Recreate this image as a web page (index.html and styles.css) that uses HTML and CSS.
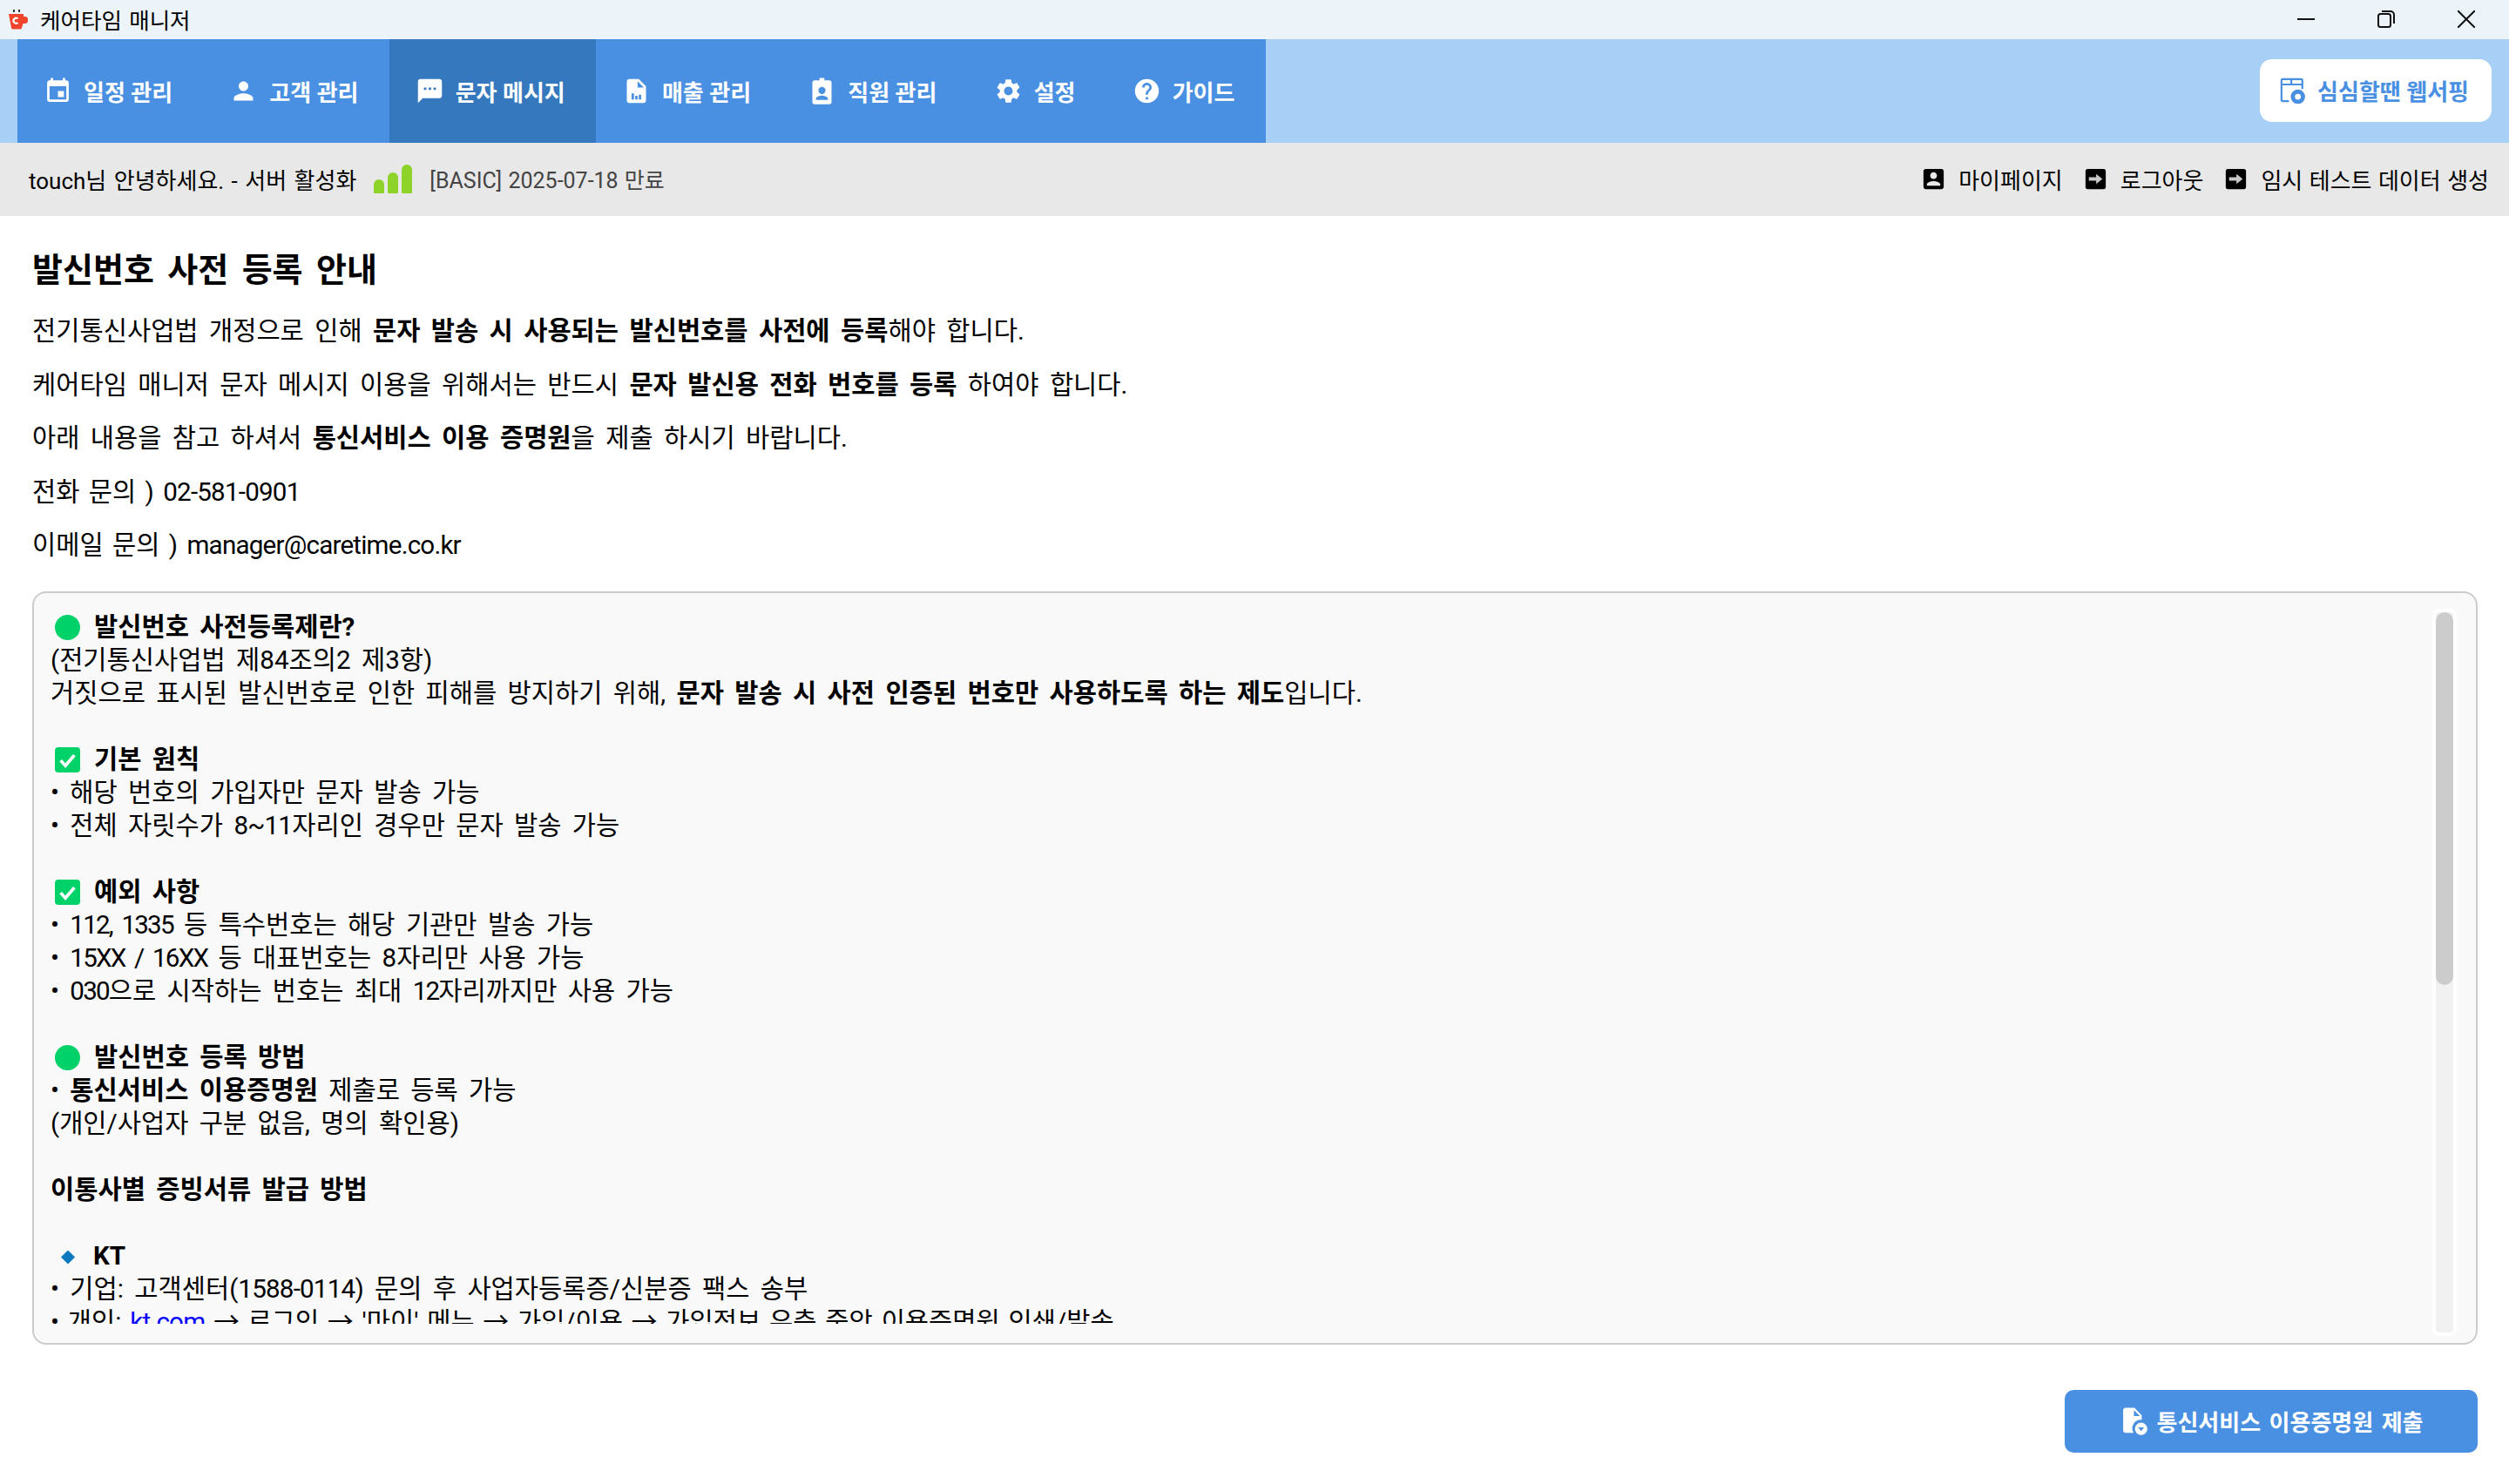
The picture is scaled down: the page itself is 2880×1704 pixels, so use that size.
FILE: index.html
```html
<!DOCTYPE html>
<html lang="ko">
<head>
  <meta charset="UTF-8">
  <title>케어타임 매니저</title>
  <link rel="stylesheet" href="styles.css">
</head>
<body>
  <svg class="icon-defs" xmlns="http://www.w3.org/2000/svg">
    <symbol id="i-event" viewBox="0 0 24 24"><path d="M17 12h-5v5h5v-5zM16 1v2H8V1H6v2H5c-1.11 0-1.99.9-1.99 2L3 19c0 1.1.89 2 2 2h14c1.1 0 2-.9 2-2V5c0-1.1-.9-2-2-2h-1V1h-2zm3 18H5V8h14v11z"/></symbol>
    <symbol id="i-person" viewBox="0 0 24 24"><path d="M12 12c2.21 0 4-1.79 4-4s-1.79-4-4-4-4 1.79-4 4 1.79 4 4 4zm0 2c-2.67 0-8 1.34-8 4v2h16v-2c0-2.66-5.33-4-8-4z"/></symbol>
    <symbol id="i-sms" viewBox="0 0 24 24"><path d="M20 2H4c-1.1 0-1.99.9-1.99 2L2 22l4-4h14c1.1 0 2-.9 2-2V4c0-1.1-.9-2-2-2zM9 11H7V9h2v2zm4 0h-2V9h2v2zm4 0h-2V9h2v2z"/></symbol>
    <symbol id="i-sales" viewBox="0 0 24 24"><path fill-rule="evenodd" d="M14 2H6c-1.1 0-2 .9-2 2v16c0 1.1.9 2 2 2h12c1.1 0 2-.9 2-2V8l-6-6zM13 3.8 18.2 9H13V3.8zM8 14h2v5H8v-5zm3 2h2v3h-2v-3zm3-1h2v4h-2v-4z"/></symbol>
    <symbol id="i-badge" viewBox="0 0 24 24"><path fill-rule="evenodd" d="M6 3h4V1h4v2h4a2 2 0 0 1 2 2v16a2 2 0 0 1-2 2H6a2 2 0 0 1-2-2V5a2 2 0 0 1 2-2zm6 5.500a3 3 0 1 0 0 6 3 3 0 0 0 0-6zM7 19.500h10v-1c0-1.700-3.300-2.600-5-2.600s-5 .9-5 2.600v1z"/></symbol>
    <symbol id="i-settings" viewBox="0 0 24 24"><path d="M19.14 12.940c.04-.3.06-.61.06-.94 0-.32-.02-.64-.07-.94l2.030-1.580c.18-.14.23-.41.12-.61l-1.920-3.320c-.12-.22-.37-.29-.59-.22l-2.390.96c-.5-.38-1.030-.7-1.620-.94l-.36-2.540c-.04-.24-.24-.41-.48-.41h-3.840c-.24 0-.43.17-.47.41l-.36 2.540c-.59.24-1.130.57-1.620.94l-2.390-.96c-.22-.08-.47 0-.59.22L2.740 8.870c-.12.21-.08.47.12.61l2.030 1.580c-.05.3-.09.63-.09.94s.02.64.07.94l-2.030 1.580c-.18.14-.23.41-.12.61l1.920 3.320c.12.22.37.29.59.22l2.390-.96c.5.38 1.030.7 1.620.94l.36 2.540c.05.24.24.41.48.41h3.840c.24 0 .44-.17.47-.41l.36-2.540c.59-.24 1.130-.56 1.620-.94l2.390.96c.22.08.47 0 .59-.22l1.920-3.320c.12-.22.07-.47-.12-.61l-2.010-1.580zM12 15.600c-1.980 0-3.600-1.620-3.600-3.600s1.620-3.600 3.600-3.600 3.600 1.620 3.600 3.600-1.620 3.600-3.600 3.600z"/></symbol>
    <symbol id="i-help" viewBox="0 0 24 24"><path d="M12 2C6.480 2 2 6.480 2 12s4.480 10 10 10 10-4.480 10-10S17.520 2 12 2zm1 17h-2v-2h2v2zm2.070-7.750l-.9.92C13.450 12.900 13 13.500 13 15h-2v-.5c0-1.100.45-2.100 1.170-2.830l1.240-1.260c.37-.36.59-.86.59-1.410 0-1.100-.9-2-2-2s-2 .9-2 2H8c0-2.210 1.790-4 4-4s4 1.790 4 4c0 .88-.36 1.680-.93 2.250z"/></symbol>
    <symbol id="i-account" viewBox="0 0 24 24"><path d="M3 5v14c0 1.100.89 2 2 2h14c1.100 0 2-.9 2-2V5c0-1.100-.9-2-2-2H5c-1.110 0-2 .9-2 2zm12 4c0 1.660-1.340 3-3 3s-3-1.340-3-3 1.340-3 3-3 3 1.340 3 3zm-9 8c0-2 4-3.100 6-3.100s6 1.100 6 3.100v1H6v-1z"/></symbol>
    <symbol id="i-exit" viewBox="0 0 24 24"><rect x="3" y="3" width="18" height="18" rx="2"/><path fill="#c8c8c8" d="M6 10.500h6.500V7.500l5.500 4.500-5.500 4.500v-3H6z"/></symbol>
    <symbol id="i-web" viewBox="0 0 24 24"><path d="M4 2h15a2 2 0 0 1 2 2v7h-1.600V8H3.600v11.400c0 .5.400.9.900.9H9V22H4a2 2 0 0 1-2-2V4a2 2 0 0 1 2-2zm-.4 1.700V6.500h6.600V3.700H3.600zm8.200 0V6.500h7.600V3.700h-7.600z"/><path fill-rule="evenodd" d="M16.500 11.500a6 6 0 1 0 0 12 6 6 0 0 0 0-12zm0 3.500a2.500 2.500 0 1 1 0 5 2.500 2.500 0 0 1 0-5z"/></symbol>
    <symbol id="i-upload" viewBox="0 0 24 24"><path d="M12.500 1H5a2 2 0 0 0-2 2v17a2 2 0 0 0 2 2h6.800a7 7 0 0 1 6.700-10.800V7.500l-6-6.500zm-.5 7V3l5 5h-5z"/><path fill-rule="evenodd" d="M18 13.500a5.200 5.200 0 1 0 0 10.400 5.200 5.200 0 0 0 0-10.400zm-2.500 4h5L18 20.500l-2.500-3z"/></symbol>
  </svg>

  <div class="titlebar">
    <div class="app-name">
      <svg class="app-logo" viewBox="0 0 24 24">
        <path fill="#333" d="M7 1h2v3H7zM13 1h2v3h-2z"/>
        <path fill="#f0452c" d="M2 6h17v3h1.500A3.500 3.500 0 0 1 24 12.500v1a3.500 3.500 0 0 1-3.500 3.500h-2L17 22a2 2 0 0 1-2 1.500H7A2 2 0 0 1 5 22z"/>
        <path fill="none" stroke="#fff" stroke-width="2.200" d="M12.500 11.500a3 3 0 1 0 0 4.500"/>
      </svg>
      케어타임 매니저
    </div>
    <div class="window-controls">
      <svg class="win-icon win-min" viewBox="0 0 20 20"><path d="M0 10h20"/></svg>
      <svg class="win-icon win-restore" viewBox="0 0 20 20"><rect x="1" y="4" width="14" height="15" rx="2.500"/><path d="M5 1h10a4 4 0 0 1 4 4v10"/></svg>
      <svg class="win-icon win-close" viewBox="0 0 20 20"><path d="M0 0l20 20M20 0L0 20"/></svg>
    </div>
  </div>

  <div class="navbar">
    <div class="menu">
      <a class="menu-item"><svg class="nav-icon"><use href="#i-event"/></svg>일정 관리</a>
      <a class="menu-item"><svg class="nav-icon"><use href="#i-person"/></svg>고객 관리</a>
      <a class="menu-item active"><svg class="nav-icon"><use href="#i-sms"/></svg>문자 메시지</a>
      <a class="menu-item"><svg class="nav-icon"><use href="#i-sales"/></svg>매출 관리</a>
      <a class="menu-item"><svg class="nav-icon"><use href="#i-badge"/></svg>직원 관리</a>
      <a class="menu-item"><svg class="nav-icon"><use href="#i-settings"/></svg>설정</a>
      <a class="menu-item"><svg class="nav-icon"><use href="#i-help"/></svg>가이드</a>
    </div>
    <a class="web-btn"><svg class="nav-icon"><use href="#i-web"/></svg>심심할땐 웹서핑</a>
  </div>

  <div class="statusbar">
    <div class="status-left">
      <span class="greeting">touch님 안녕하세요. - 서버 활성화</span>
      <span class="signal"><i class="bar-1"></i><i class="bar-2"></i><i class="bar-3"></i></span>
      <span class="plan">[BASIC] 2025-07-18 만료</span>
    </div>
    <div class="status-right">
      <a class="status-link"><svg class="status-icon"><use href="#i-account"/></svg>마이페이지</a>
      <a class="status-link"><svg class="status-icon"><use href="#i-exit"/></svg>로그아웃</a>
      <a class="status-link"><svg class="status-icon"><use href="#i-exit"/></svg>임시 테스트 데이터 생성</a>
    </div>
  </div>

  <div class="content">
    <h1>발신번호 사전 등록 안내</h1>
    <p>전기통신사업법 개정으로 인해 <b>문자 발송 시 사용되는 발신번호를 사전에 등록</b>해야 합니다.</p>
    <p>케어타임 매니저 문자 메시지 이용을 위해서는 반드시 <b>문자 발신용 전화 번호를 등록</b> 하여야 합니다.</p>
    <p>아래 내용을 참고 하셔서 <b>통신서비스 이용 증명원</b>을 제출 하시기 바랍니다.</p>
    <p class="contact">전화 문의 ) <span class="num">02-581-0901</span></p>
    <p class="contact">이메일 문의 ) <span class="num">manager@caretime.co.kr</span></p>

    <div class="notice">
      <div class="notice-body">
        <b><i class="mark dot"></i>발신번호 사전등록제란?</b><br>
        (전기통신사업법 제84조의2 제3항)<br>
        거짓으로 표시된 발신번호로 인한 피해를 방지하기 위해, <b>문자 발송 시 사전 인증된 번호만 사용하도록 하는 제도</b>입니다.<br>
        <br>
        <b><i class="mark check"><svg viewBox="0 0 24 24"><path d="M5.500 12.500l4.500 5 8.500-10"/></svg></i>기본 원칙</b><br>
        • 해당 번호의 가입자만 문자 발송 가능<br>
        • 전체 자릿수가 <span class="num">8~11</span>자리인 경우만 문자 발송 가능<br>
        <br>
        <b><i class="mark check"><svg viewBox="0 0 24 24"><path d="M5.500 12.500l4.500 5 8.500-10"/></svg></i>예외 사항</b><br>
        • <span class="tight">112, 1335</span> 등 특수번호는 해당 기관만 발송 가능<br>
        • <span class="tight">15XX / 16XX</span> 등 대표번호는 8자리만 사용 가능<br>
        • <span class="tight">030</span>으로 시작하는 번호는 최대 <span class="tight">12</span>자리까지만 사용 가능<br>
        <br>
        <b><i class="mark dot"></i>발신번호 등록 방법</b><br>
        • <b>통신서비스 이용증명원</b> 제출로 등록 가능<br>
        (개인/사업자 구분 없음, 명의 확인용)<br>
        <br>
        <b>이통사별 증빙서류 발급 방법</b><br>
        <br>
        <b><i class="mark diamond"></i>KT</b><br>
        • 기업: 고객센터(<span class="num">1588-0114</span>) 문의 후 사업자등록증/신분증 팩스 송부<br>
        <span class="last-line">• 개인: <a class="link num">kt.com</a> → 로그인 → '마이' 메뉴 → 가입/이용 → 가입정보 우측 중앙 이용증명원 인쇄/발송</span>
      </div>
      <div class="scrollbar"><div class="scroll-thumb"></div></div>
    </div>

    <div class="actions">
      <a class="submit-btn"><svg class="nav-icon"><use href="#i-upload"/></svg>통신서비스 이용증명원 제출</a>
    </div>
  </div>
</body>
</html>
```

FILE: styles.css
```css
* {
  box-sizing: border-box;
}

html, body {
  margin: 0;
  height: 100%;
}

body {
  font-family: Roboto, "Noto Sans CJK KR", sans-serif;
  color: #000;
  background: #fff;
  overflow: hidden;
}

.icon-defs {
  display: none;
}

/* title bar */
.titlebar {
  height: 45px;
  display: flex;
  align-items: center;
  justify-content: space-between;
  padding: 0 0 2px 8px;
  background: #ecf4fa;
}

.app-name {
  display: flex;
  align-items: center;
  gap: 14px;
  font-size: 25.500px;
  word-spacing: 2px;
}

.app-logo {
  width: 24px;
  height: 24px;
}

.window-controls {
  display: flex;
  align-items: center;
  gap: 72px;
  padding-right: 39px;
}

.win-icon {
  width: 20px;
  height: 20px;
  fill: none;
  stroke: #111;
  stroke-width: 2;
}

/* nav */
.navbar {
  height: 119px;
  display: flex;
  justify-content: space-between;
  align-items: center;
  padding: 0 20px;
  background: #a8cff5;
}

.menu {
  display: flex;
  align-self: stretch;
  background: #4a90e2;
}

.menu-item {
  display: flex;
  align-items: center;
  gap: 13px;
  padding: 0 35.200px 0 30px;
  color: #fff;
  font-size: 26px;
  font-weight: 700;
}

.menu-item.active {
  background: #3678bd;
}

.nav-icon {
  width: 33px;
  height: 33px;
  fill: currentColor;
  flex: none;
}

.web-btn {
  display: flex;
  align-items: center;
  gap: 12px;
  height: 72px;
  margin-bottom: 2px;
  padding: 0 26px 0 21.500px;
  background: #fff;
  border-radius: 14px;
  color: #4a90e2;
  font-size: 26px;
  font-weight: 700;
}

/* status row */
.statusbar {
  height: 84px;
  display: flex;
  justify-content: space-between;
  align-items: center;
  padding: 0 23px 2px 33px;
  background: #e8e8e8;
  font-size: 26px;
}

.status-left, .status-right {
  display: flex;
  align-items: center;
}

.greeting {
  word-spacing: 2px;
}

.signal {
  display: flex;
  align-items: flex-end;
  gap: 4px;
  margin: 0 20px;
  height: 33px;
}

.signal i {
  width: 12px;
  background: #8ed329;
  border-radius: 6px 6px 1px 1px;
}

.bar-1 { height: 16px; }
.bar-2 { height: 24px; }
.bar-3 { height: 33px; }

.plan {
  color: #444;
  font-size: 25px;
  word-spacing: 1px;
}

.status-right {
  gap: 22px;
  word-spacing: 1px;
}

.status-link {
  display: flex;
  align-items: center;
  gap: 13px;
}

.status-icon {
  width: 31px;
  height: 31px;
  fill: #000;
}

/* page body */
.content {
  padding: 0 36px 0 37px;
}

h1 {
  margin: 37px 0 15px;
  font-size: 38px;
  line-height: 50px;
  font-weight: 700;
  word-spacing: 6px;
}

p {
  margin: 0;
  font-size: 29.600px;
  line-height: 61.500px;
  word-spacing: 5px;
}

p.contact {
  word-spacing: 3px;
}

.notice {
  position: relative;
  height: 865px;
  margin-top: 21px;
  padding: 20px 60px 22px 19px;
  background: #f9f9f9;
  border: 2px solid #ccc;
  border-radius: 16px;
}

.notice-body {
  height: 100%;
  overflow: hidden;
  font-size: 29.600px;
  line-height: 38px;
  word-spacing: 5px;
}

.last-line {
  word-spacing: 2.500px;
}

/* latin runs sit tighter than roboto in the original font */
.num {
  letter-spacing: -0.800px;
}

.tight {
  letter-spacing: -1.800px;
}

.mark {
  display: inline-block;
  width: 29px;
  height: 29px;
  margin: 0 16px 0 5px;
  vertical-align: -5px;
}

.dot {
  background: #00d26a;
  border-radius: 50%;
}

.check {
  background: #00d26a;
  border-radius: 4px;
}

.check svg {
  display: block;
  fill: none;
  stroke: #fff;
  stroke-width: 3;
}

.diamond {
  width: 16px;
  height: 16px;
  margin: 0 21px 0 12px;
  vertical-align: 0;
  background: #0b78c0;
  clip-path: polygon(50% 0, 100% 50%, 50% 100%, 0 50%);
}

.link {
  color: #00f;
  text-decoration: underline;
}

.scrollbar {
  position: absolute;
  top: 22px;
  right: 26px;
  width: 20px;
  height: 827px;
  background: #f1f1f1;
  box-shadow: 0 0 0 4px #fff;
  border-radius: 4px;
}

.scroll-thumb {
  height: 428px;
  background: #ccc;
  border-radius: 10px;
}

.actions {
  display: flex;
  justify-content: flex-end;
  margin-top: 52px;
}

.submit-btn {
  display: flex;
  align-items: center;
  justify-content: center;
  gap: 10px;
  width: 474px;
  height: 72px;
  background: #4a90e2;
  border-radius: 10px;
  color: #fff;
  font-size: 26px;
  font-weight: 700;
  word-spacing: 3px;
}
```
